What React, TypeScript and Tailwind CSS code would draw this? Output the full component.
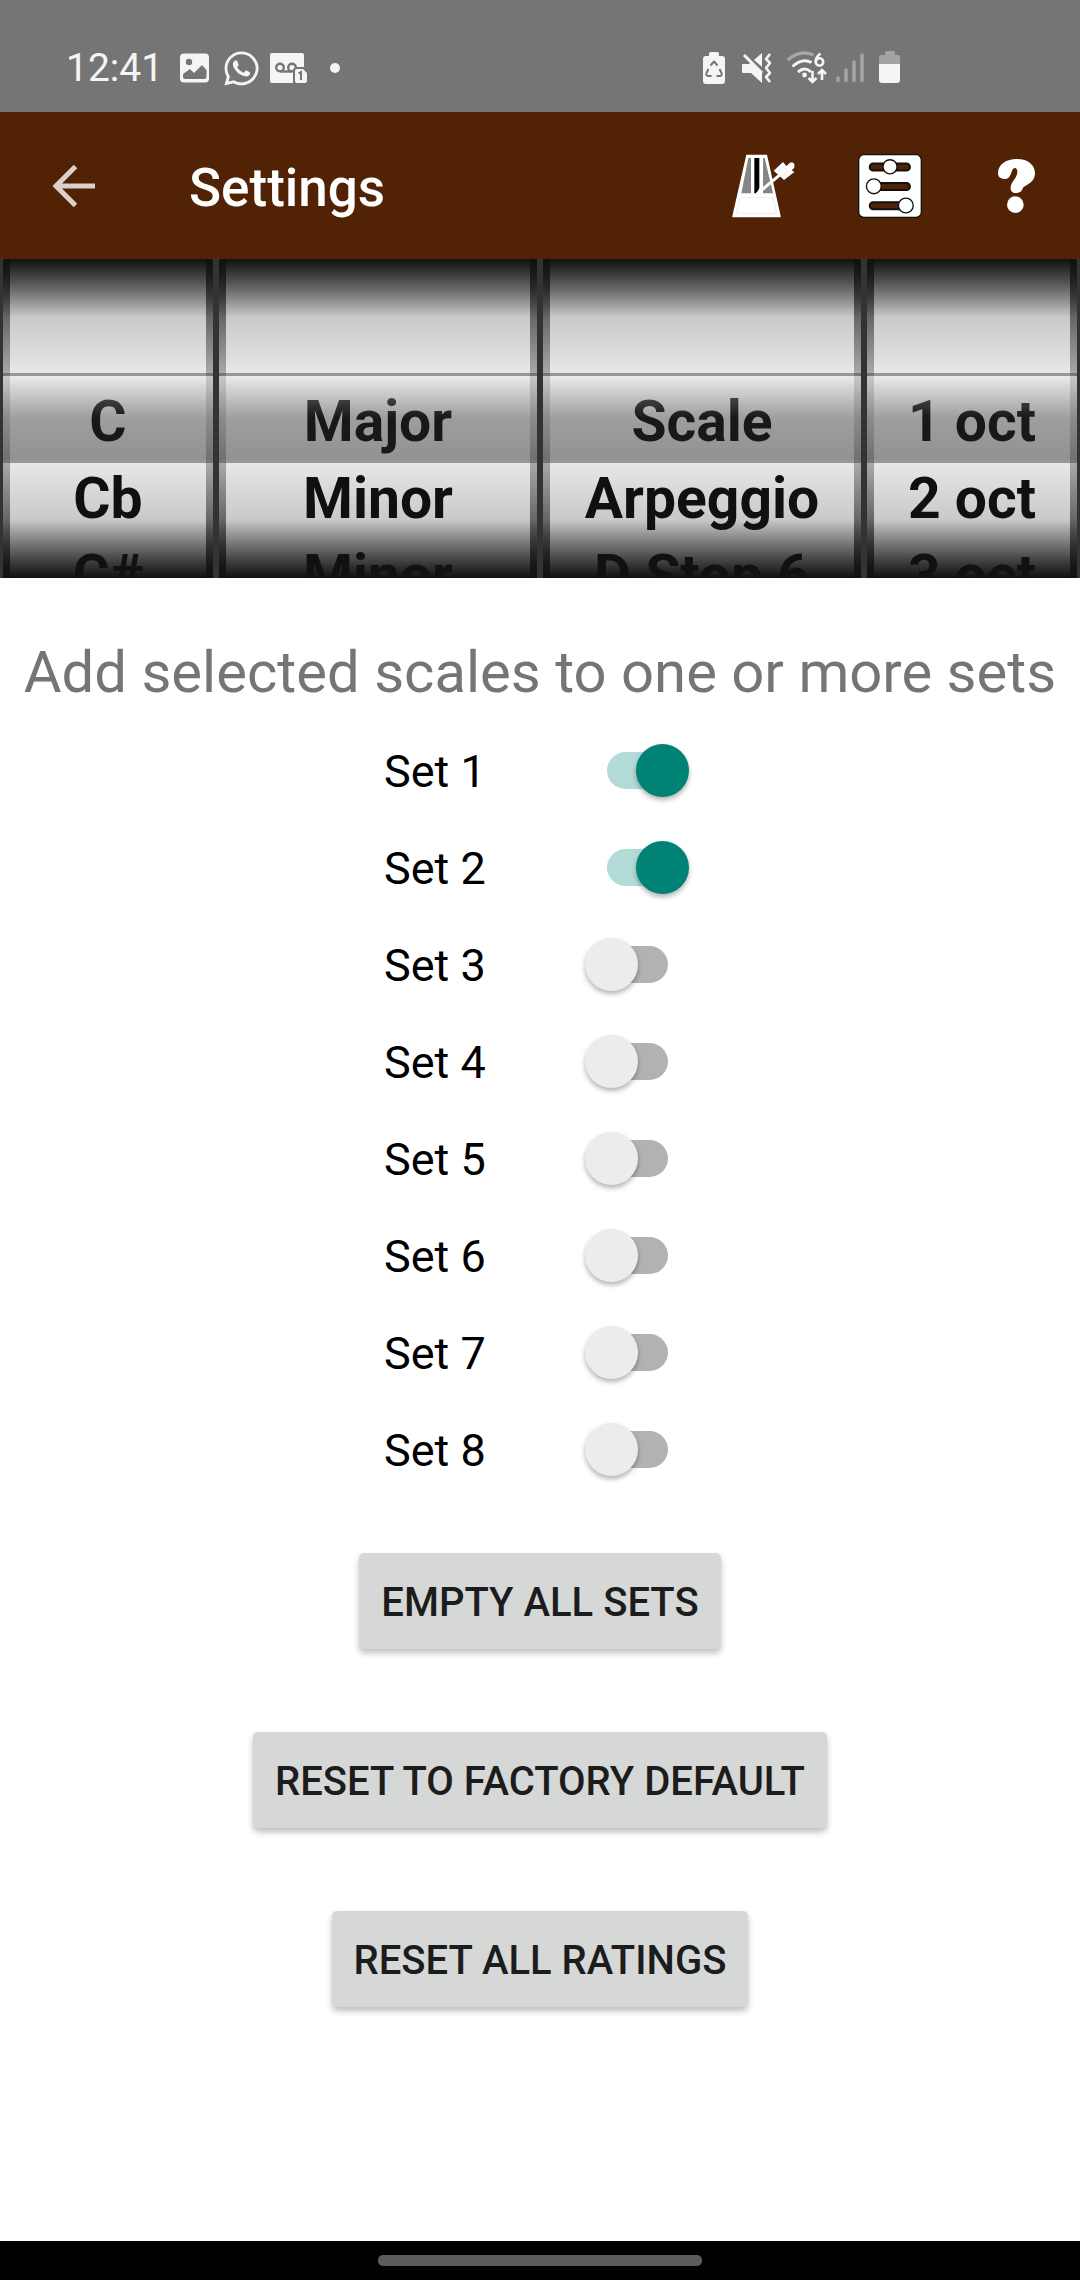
import { useState } from "react";
import { FaWhatsapp } from "react-icons/fa";

const WHEELS = [
  { name: "Key", items: ["C", "Cb", "C#"] },
  { name: "Mode", items: ["Major", "Minor", "Minor"] },
  { name: "Type", items: ["Scale", "Arpeggio", "D Stop 6"] },
  { name: "Octaves", items: ["1 oct", "2 oct", "3 oct"] },
];

function StatusBar() {
  return (
    <div className="flex h-28 items-center justify-between bg-[#757575] pt-6 pr-[179px] pl-[66px] text-[#f5f5f5]">
      <div className="flex items-center">
        <span className="text-[39px] leading-10">12:41</span>
        <svg className="ml-[17px] size-[30px]" viewBox="0 0 30 30" aria-hidden="true">
          <rect width="29" height="29" y="0.5" rx="4" fill="currentColor" />
          <circle cx="9" cy="9" r="3.2" fill="#757575" />
          <path d="M3 21l7-5 4 4 8-8 4.500 5v7q0 2-2 2h-19.500q-2 0-2-2z" fill="#757575" />
        </svg>
        <FaWhatsapp className="ml-3 size-[39px]" aria-hidden="true" />
        <svg className="ml-[9px] h-[30px] w-[37px]" viewBox="0 0 37 30" aria-hidden="true">
          <path d="M2 0h30q2 0 2 2v12h-7q-4 0-4 4v12H2q-2 0-2-2V2q0-2 2-2z" fill="currentColor" />
          <g fill="none" stroke="#757575" strokeWidth="2.4">
            <circle cx="10" cy="14.500" r="3.800" />
            <circle cx="22" cy="14.500" r="3.800" />
            <path d="M10 18.500h12" />
          </g>
          <path d="M27 16h6l4 4v8q0 2-2 2h-8q-2 0-2-2V18q0-2 2-2z" fill="currentColor" />
          <path d="M28.500 20.500l2.500-1.500v8" fill="none" stroke="#757575" strokeWidth="2" />
        </svg>
        <span className="ml-[23px] size-2.5 rounded-full bg-[#f5f5f5]" />
      </div>

      <svg className="h-9 w-[198px]" viewBox="704 50 198 36" fill="none" aria-hidden="true">
        <path d="M710 54q0-2 2-2h6q2 0 2 2v2h3q3 0 3 3v22q0 3-3 3h-16q-3 0-3-3V59q0-3 3-3h3z" fill="currentColor" />
        <g stroke="#757575" strokeWidth="2" strokeLinejoin="round">
          <path d="M711.500 65.500l3.500-4 3.500 4" />
          <path d="M709.500 69l-2 4q-1 3 2 3h3" />
          <path d="M720.500 69l2 4q1 3-2 3h-3" />
        </g>
        <path d="M744 64h6l2-2 11 11v10l-11-10h-8q-1 0-1-1v-7q0-1 1-1z" fill="currentColor" />
        <path d="M755 60l8-7v14z" fill="currentColor" />
        <path d="M745 55l18 18" stroke="currentColor" strokeWidth="3" />
        <path d="M771 54l-4 5 4 4-4 5 4 5-4 4 4 5" stroke="currentColor" strokeWidth="2.600" strokeLinejoin="round" />
        <path d="M788.500 60q13-11 26-5" stroke="#a9a9a9" strokeWidth="3" />
        <g stroke="currentColor" strokeWidth="3">
          <path d="M793.500 66.500q10-9 19-4" />
          <path d="M799 72q7-6 13 0" />
        </g>
        <circle cx="805.500" cy="75" r="2.400" fill="currentColor" />
        <g stroke="currentColor" strokeWidth="2.600">
          <circle cx="820.500" cy="62" r="3.700" />
          <path d="M821.500 53.500q-5 4-5 8.500" />
          <path d="M813.500 71v10M809.500 78l4 4 4-4" />
          <path d="M823 80V70M819 74l4-4 4 4" />
        </g>
        <g stroke="#a3a3a3" strokeWidth="3.600" strokeLinecap="round">
          <path d="M839 78v2.500M847 70v10.500M855 62v18.500M863 55v25.500" />
        </g>
        <path d="M886 53q0-2 2-2h6q2 0 2 2v2h3q2 0 2 2v7h-21v-7q0-2 2-2h4z" fill="#a3a3a3" />
        <path d="M880 64h21v16q0 3-3 3h-15q-3 0-3-3z" fill="currentColor" />
      </svg>
    </div>
  );
}

function MetronomeIcon() {
  return (
    <svg className="size-16" viewBox="0 0 190 192" aria-hidden="true">
      <path d="M42 2h62l41 184q1 4-3 4H3q-4 0-3-4z" fill="#fff" />
      <path d="M48 12h8v106H27zM92 12h5l25 106H92z" fill="#858585" />
      <path d="M66 12h15v90l-8 16h-7z" fill="#000" />
      <path d="M74 120L184 28" stroke="#fff" strokeWidth="9" />
      <path d="M124 50l28-26 10 12 14-12 10 9v8l-8 8 8 5-31 24-7-7z" fill="#fff" />
      <path d="M152 38l14 12-14 18-15-14z" fill="none" stroke="#ddd" strokeWidth="2" />
      <path d="M24 131h98l11 47H13z" fill="none" stroke="#e4e4e4" strokeWidth="2" />
    </svg>
  );
}

function MixerIcon() {
  return (
    <svg className="size-16" viewBox="0 0 190 190" stroke="#111" strokeWidth="4" aria-hidden="true">
      <rect x="2" y="2" width="186" height="186" rx="15" fill="#fff" />
      <g fill="#522204" strokeWidth="6">
        <rect x="35" y="28" width="119" height="21" rx="10" />
        <rect x="35" y="86" width="119" height="21" rx="10" />
        <rect x="35" y="143" width="119" height="21" rx="10" />
      </g>
      <g fill="#fff">
        <circle cx="95" cy="38" r="21" />
        <circle cx="47" cy="96" r="22" />
        <circle cx="142" cy="153" r="22" />
      </g>
    </svg>
  );
}

function HelpIcon() {
  return (
    <svg className="h-[54px] w-[37px]" viewBox="0 0 111 162" fill="#fff" aria-hidden="true">
      <path d="M0 43C0 15 25 0 57 0C90 0 111 18 111 43C111 70 85 78 77 84C72 90 72 102 54 102C40 102 37 92 38 84C41 65 56 60 58 40C59 26 50 24 45 30C38 38 40 60 20 60C8 60 0 54 0 43Z" />
      <circle cx="52" cy="137" r="25" />
    </svg>
  );
}

function AppBar() {
  return (
    <header className="flex h-[147px] items-center bg-[#522204] pr-8 pl-[52px]">
      <button type="button" aria-label="Back">
        <svg className="size-11" viewBox="0 0 44 44" fill="none" stroke="#ddd0c8" strokeWidth="5" aria-hidden="true">
          <path d="M43 22H5M23.500 2.500L4 22l19.500 19.500" />
        </svg>
      </button>
      <h1 className="ml-[93px] flex-1 pt-1 text-[53px] leading-[60px] font-medium text-white">Settings</h1>
      <div className="flex items-center gap-[62px]">
        <button type="button" aria-label="Metronome">
          <MetronomeIcon />
        </button>
        <button type="button" aria-label="Mixer">
          <MixerIcon />
        </button>
        <button type="button" aria-label="Help" className="flex w-16 justify-center">
          <HelpIcon />
        </button>
      </div>
    </header>
  );
}

function Wheel({ name, items }: { name: string; items: string[] }) {
  return (
    <div
      role="listbox"
      aria-label={name}
      className="relative h-[319px] min-w-0 overflow-hidden border-x-[3px] border-[#333] bg-[linear-gradient(#222,#ddd_50%,#222)] px-[7px]"
    >
      <div className="h-full bg-[linear-gradient(#aaa,#fff_50%,#aaa)] pt-[124px] text-center text-[57px] leading-[77px] font-bold whitespace-nowrap text-[#101010]">
        {items.map((item, i) => (
          <div key={i} role="option" aria-selected={i === 0}>
            {item}
          </div>
        ))}
      </div>
      <div className="absolute inset-x-0 top-[114px] h-[90px] border-y-[3px] border-[#33333370] bg-[linear-gradient(#eeeeee70,#22222270_50%,#22222270)] bg-clip-padding" />
      <div className="absolute -inset-x-[3px] top-0 h-[58px] bg-[linear-gradient(#111,transparent)]" />
      <div className="absolute -inset-x-[3px] bottom-0 h-[58px] bg-[linear-gradient(transparent,#111)]" />
    </div>
  );
}

function SetRow({ index, on, onChange }: { index: number; on: boolean; onChange: () => void }) {
  return (
    <label className="flex h-[97px] w-78 items-center justify-between pr-[7px] text-[45px] leading-[54px] text-black">
      <span className="pt-0.5">Set {index}</span>
      <input
        type="checkbox"
        role="switch"
        checked={on}
        onChange={onChange}
        className="relative h-[53px] w-[104px] appearance-none before:absolute before:top-2 before:left-[22px] before:h-[37px] before:w-[61px] before:rounded-full before:bg-[#b2b2b2] after:absolute after:top-0 after:left-0 after:size-[53px] after:rounded-full after:bg-[#ececec] after:shadow-[0_3px_5px_rgba(0,0,0,0.3)] checked:before:bg-[#b2dbd7] checked:after:left-[51px] checked:after:bg-[#008375]"
      />
    </label>
  );
}

function ActionButton({ children }: { children: string }) {
  return (
    <button
      type="button"
      className="h-24 rounded-[5px] bg-[#d6d8d7] px-[22px] pt-1 text-[40px] leading-[48px] font-medium text-[#1c1c1c] shadow-[0_4px_6px_rgba(0,0,0,0.26)]"
    >
      {children}
    </button>
  );
}

export default function App() {
  const [sets, setSets] = useState([true, true, false, false, false, false, false, false]);
  const toggle = (i: number) => setSets(sets.map((on, j) => (j === i ? !on : on)));

  return (
    <div className="flex min-h-screen flex-col bg-white font-[Roboto,sans-serif]">
      <StatusBar />
      <AppBar />
      <div className="grid grid-cols-[2fr_3fr_3fr_2fr]">
        {WHEELS.map((wheel) => (
          <Wheel key={wheel.name} {...wheel} />
        ))}
      </div>
      <main className="flex flex-1 flex-col items-center">
        <h2 className="mt-[58px] mb-3.5 text-center text-[58px] leading-[72px] text-[#757575]">
          Add selected scales to one or more sets
        </h2>
        {sets.map((on, i) => (
          <SetRow key={i} index={i + 1} on={on} onChange={() => toggle(i)} />
        ))}
        <div className="mt-[55px] flex flex-col items-center gap-[83px]">
          <ActionButton>EMPTY ALL SETS</ActionButton>
          <ActionButton>RESET TO FACTORY DEFAULT</ActionButton>
          <ActionButton>RESET ALL RATINGS</ActionButton>
        </div>
      </main>
      <div className="flex h-[39px] items-center justify-center bg-black">
        <div className="h-[11px] w-[30%] rounded-[5px] bg-[#5c5c5c]" />
      </div>
    </div>
  );
}
